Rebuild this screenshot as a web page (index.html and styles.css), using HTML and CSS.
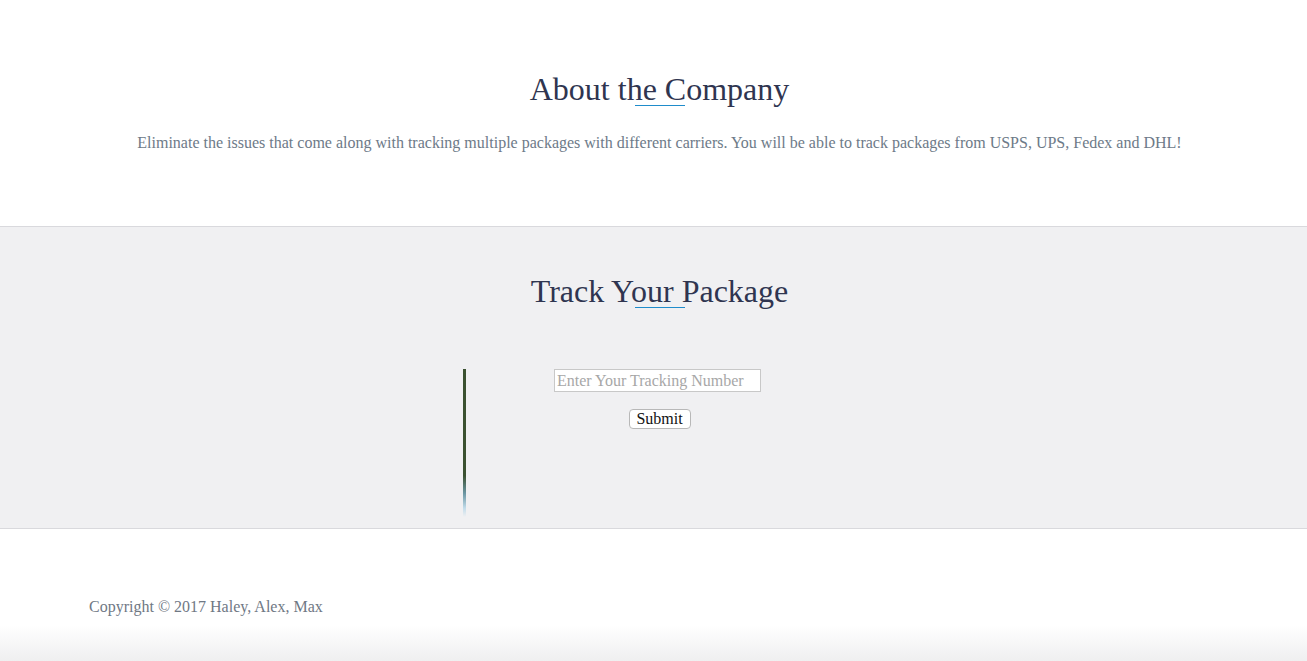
FILE: index.html
```html
<!DOCTYPE html>
<html lang="en">
<head>
<meta charset="utf-8">
<title>Package Tracker</title>
<link rel="stylesheet" href="styles.css">
</head>
<body>
<section class="about">
  <h1 class="title">About the Company</h1>
  <div class="rule"></div>
  <p class="lead">Eliminate the issues that come along with tracking multiple packages with different carriers. You will be able to track packages from USPS, UPS, Fedex and DHL!</p>
</section>
<section class="track">
  <h1 class="title">Track Your Package</h1>
  <div class="rule"></div>
  <div class="track-row">
    <form class="track-col">
      <input class="track-input" type="text" placeholder="Enter Your Tracking Number">
      <button class="track-btn" type="button">Submit</button>
    </form>
  </div>
</section>
<footer class="footer">
  <p class="copy">Copyright © 2017 Haley, Alex, Max</p>
</footer>
</body>
</html>
```

FILE: styles.css
```css
* { box-sizing: border-box; }
html, body { margin: 0; padding: 0; }
body {
  font-family: "Liberation Serif", "Times New Roman", serif;
  background: #fff;
  width: 1307px;
  min-height: 661px;
}
.about {
  padding: 73px 0 73px 12px;
  background: #fff;
}
.title {
  margin: 0;
  font-size: 32px;
  line-height: 32px;
  font-weight: normal;
  text-align: center;
  color: #2f3550;
}
.rule {
  width: 50px;
  height: 1px;
  margin: 0 auto;
  background: #1f8ccb;
}
.lead {
  margin: 27px 0 0;
  font-size: 16px;
  line-height: 20px;
  text-align: center;
  color: #6d7a88;
}
.track {
  background: #f0f0f2;
  border-top: 1px solid #d9d9dd;
  border-bottom: 1px solid #d9d9dd;
  padding: 48px 0 11px 12px;
}
.track-row {
  display: flex;
  justify-content: center;
  margin-top: 61px;
}
.track-col {
  width: 390px;
  height: 148px;
  margin: 0 0 0 -3px;
  padding-left: 3px;
  display: flex;
  flex-direction: column;
  align-items: center;
  background: linear-gradient(to bottom, #3b5131 0%, #3b5131 72%, #6b96a3 84%, #c2dcea 94%, rgba(230,240,246,0) 100%) left top / 3px 100% no-repeat;
}
.track-input {
  width: 207px;
  height: 23px;
  margin: 0 4px 0 0;
  padding: 0 2px;
  border: 1px solid #c8c8c8;
  background: #fff;
  font-family: "Liberation Serif", "Times New Roman", serif;
  font-size: 16px;
  color: #333;
  outline: none;
}
.track-input::placeholder { color: #a7a7a7; }
.track-btn {
  margin-top: 17px;
  width: 62px;
  height: 20px;
  padding: 0;
  border: 1px solid #b8b8b8;
  border-radius: 4px;
  background: #fff;
  font-family: "Liberation Serif", "Times New Roman", serif;
  font-size: 16px;
  line-height: 18px;
  color: #111;
}
.footer {
  height: 132px;
  padding: 68px 0 0 89px;
  background: linear-gradient(to bottom, #fff 0, #fff 96px, #efeff0 132px);
}
.copy {
  margin: 0;
  font-size: 16px;
  line-height: 20px;
  color: #6f7884;
}
```
